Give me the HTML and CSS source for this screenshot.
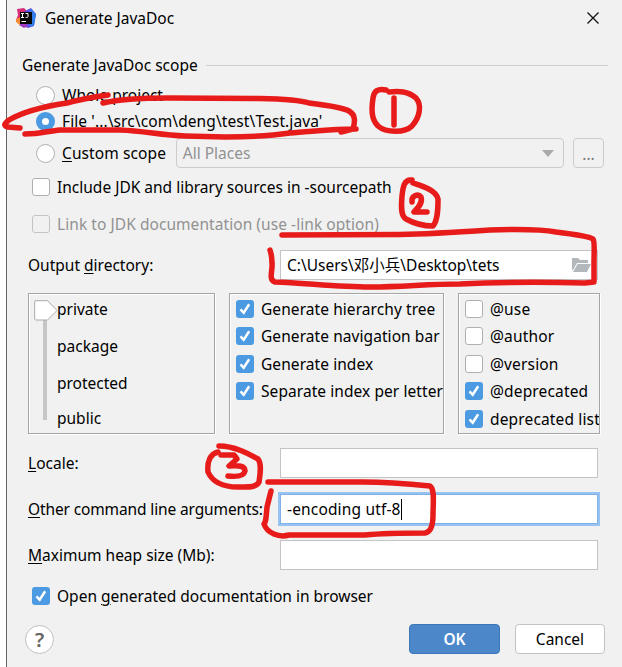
FILE: index.html
```html
<!DOCTYPE html>
<html lang="en">
<head>
<meta charset="utf-8">
<title>Generate JavaDoc</title>
<link rel="stylesheet" href="styles.css">
</head>
<body>
<svg class="defs" width="0" height="0"><symbol id="tick" viewBox="0 0 18 18"><path d="M4.500 9.300l3.200 3.500 5.500-8.500" fill="none" stroke="#fff" stroke-width="2.500"/></symbol></svg>
<main class="dialog">
  <header class="titlebar">
    <svg class="logo" viewBox="0 0 20 20">
      <path d="M1 1l7-1 4 4-4 9-8-1 2-5z" fill="#d72d79"/>
      <path d="M0 11l5-2 4 8-4 1-5-4z" fill="#f58b35"/>
      <path d="M9 3l6-3 5 6-2 12-6 2-8-3z" fill="#5450e8"/>
      <path d="M14 1l6 5-2 11-4 2z" fill="#317fe8"/>
      <path d="M3 17l5 3 4-2-3-3z" fill="#a438bd"/>
      <path d="M4 4h12v12H4z" fill="#080808"/>
      <path d="M5 5.500h3M6.500 5.500v4M5 9.500h3M9.500 5.500H12v3q0 1-1.500 1h-1M5.500 13.500H10" fill="none" stroke="#fff" stroke-width="1"/>
    </svg>
    <h1 class="title">Generate JavaDoc</h1>
    <svg class="close" viewBox="0 0 12 12"><path d="M.5.5l11 11M11.500.5l-11 11" stroke="#111" stroke-width="1.300"/></svg>
  </header>

  <div class="scope-head"><span>Generate JavaDoc scope</span><i class="rule"></i></div>
  <div class="radio-row"><i class="radio"></i><span>Whole project</span></div>
  <div class="radio-row"><i class="radio on"></i><span class="file">File '...\src\com\deng\test\Test.java'</span></div>
  <div class="custom-row">
    <i class="radio"></i><span class="custom"><u>C</u>ustom scope</span>
    <div class="combo"><span>All Places</span><svg class="arrow" viewBox="0 0 12 7"><path d="M0 0h12L6 7z" fill="#aaa"/></svg></div>
    <div class="more">...</div>
  </div>

  <div class="check-row include"><i class="box"></i><span>Include JDK and library sources in -sourcepath</span></div>
  <div class="check-row link"><i class="box"></i><span>Link to JDK documentation (use -link option)</span></div>

  <div class="field output"><label>Output <u>d</u>irectory:</label>
    <div class="input"><span class="path">C:\Users\邓小兵\Desktop\tets</span>
      <svg class="folder" viewBox="0 0 19 14"><path d="M0 0h6l2 2h8v3H5L1 12H0z" fill="#b3b8bc"/><path d="M5.500 6H19l-4 8H1z" fill="#b3b8bc"/></svg>
    </div>
  </div>

  <section class="panels">
    <div class="panel access">
      <svg class="slider" viewBox="0 0 24 126"><path d="M9 15h4v105H9z" fill="#c6c6c6"/><path d="M1 .7h12.500L23 10.500l-9.500 9.500H1.500l-.8-.8V1.500z" fill="#fff" stroke="#aaa"/></svg>
      <ul class="levels"><li>private</li><li>package</li><li>protected</li><li>public</li></ul>
    </div>
    <div class="panel options">
      <div class="opt"><svg class="box on"><use href="#tick"/></svg><span>Generate hierarchy tree</span></div>
      <div class="opt"><svg class="box on"><use href="#tick"/></svg><span>Generate navigation bar</span></div>
      <div class="opt"><svg class="box on"><use href="#tick"/></svg><span>Generate index</span></div>
      <div class="opt"><svg class="box on"><use href="#tick"/></svg><span>Separate index per letter</span></div>
    </div>
    <div class="panel tags">
      <div class="opt"><i class="box"></i><span>@use</span></div>
      <div class="opt"><i class="box"></i><span>@author</span></div>
      <div class="opt"><i class="box"></i><span>@version</span></div>
      <div class="opt"><svg class="box on"><use href="#tick"/></svg><span>@deprecated</span></div>
      <div class="opt"><svg class="box on"><use href="#tick"/></svg><span>deprecated list</span></div>
    </div>
  </section>

  <div class="field"><label><u>L</u>ocale:</label><div class="input"></div></div>
  <div class="field"><label class="arguments"><u>O</u>ther command line arguments:</label><div class="input focus"><span class="args">-encoding utf-8</span><i class="caret"></i></div></div>
  <div class="field"><label><u>M</u>aximum heap size (Mb):</label><div class="input"></div></div>
  <div class="check-row open"><svg class="box on"><use href="#tick"/></svg><span>Open <u>g</u>enerated documentation in browser</span></div>

  <footer class="footer"><div class="help">?</div><div class="btn ok">OK</div><div class="btn cancel">Cancel</div></footer>
</main>

<svg class="ink" viewBox="0 0 622 667">
  <path d="M108 95C94 97 78 100 67 103C47 106 26 110 9 120C4 124 3 126 8 127L20 128"/>
  <path d="M103 103C120 99 145 98 168 98L260 98.500C285 99 300 100 309 103C325 105 342 107 349 111C356 115 355 122 353 129L341 132M356 129C330 129 310 132 290 133C270 136 250 137 225 137L185 136C160 135 145 131 120 130L60 130C48 131 40 134 25 134"/>
  <path d="M386 90C378 88 374 91 373 98C371 112 372 120 378 126C386 133 405 133 412 126C420 117 422 105 416 98C408 91 399 91 389 92M394 98V125" />
  <path d="M412 180C404 179 403 187 402 196C401 208 401 216 406 219C415 224 425 226 433 226C438 220 438 208 438 199C436 190 422 186 413 183"/>
  <path d="M412 202C411 196 418 193 421 197C423 203 418 208 414 212H427" />
  <path d="M282 235L400 234.500C430 234 460 232 490 230C520 229 540 229 556 232C573 234 588 236 593 239C595 242 594 252 594 261V282L585 283C550 282 500 282 460 284C425 284 405 287 370 287C338 287 305 283 275 282C268 280 273 270 272 263C272 257 271 253 270 250"/>
  <path d="M219 446C235 446 249 454 258 459C262 464 260 475 259 482C256 488 248 487 238 487C220 487 212 481 208 472C207 462 210 454 218 452"/>
  <path d="M221 455H234L237 459L229 466C239 465 245 466 245 471C244 476 237 477 228 476"/>
  <path d="M268 482L363 482C390 482 410 484 430 486C435 489 433 503 433 515C433 524 431 532 425 533C407 533 386 533 365 535L289 535C279 538 267 533 264 524C266 522 266 518 267 507L271 491"/>
</svg>
</body>
</html>
```

FILE: styles.css
```css
* { box-sizing: border-box; }
body { margin: 0; width: 622px; height: 667px; overflow: hidden; background: #fff; color: #000; font: 15.500px/20px "Noto Sans", "Noto Sans CJK SC", sans-serif; white-space: nowrap; position: relative; }
.defs { position: absolute; }
u { text-decoration-thickness: 1px; text-underline-offset: 2px; }
label { padding-bottom: 1px; }
.dialog { margin-left: 6px; height: 667px; border-left: 1px solid #666; background: #f1f1f1; display: flex; flex-direction: column; }
.titlebar { height: 36px; padding: 0 23px 0 9px; display: flex; align-items: center; flex: none; }
.logo { width: 20px; height: 20px; }
.title { margin: 0 auto 0 9px; font-size: 15.500px; font-weight: 400; }
.close { width: 12px; height: 12px; }
.scope-head { margin-top: 19px; height: 20px; padding: 0 14px 0 15px; display: flex; align-items: center; gap: 8px; }
.rule { flex: 1; height: 1px; background: #cecece; }
.radio-row { height: 26px; padding-left: 29px; display: flex; align-items: center; gap: 6px; }
.scope-head + .radio-row { margin-top: 7px; }
.file { letter-spacing: .1px; }
.radio { width: 19px; height: 19px; border: 1px solid #b0b0b0; border-radius: 50%; background: #fff; flex: none; }
.radio + span { margin-left: 1px; }
.radio.on { border: 6px solid #4c9ae2; }
.custom-row { margin-top: 4px; height: 30px; padding: 0 18px 0 29px; display: flex; align-items: center; }
.custom-row .custom { width: 114px; margin-left: 7px; padding-bottom: 1px; letter-spacing: .1px; }
.combo { width: 389px; height: 30px; margin-right: 9px; padding: 0 9px 0 6px; border: 1px solid #ccc; border-radius: 4px; display: flex; align-items: center; justify-content: space-between; color: #929292; }
.arrow { width: 12px; height: 7px; }
.more { width: 31px; height: 30px; border: 1px solid #ccc; border-radius: 4px; text-align: center; line-height: 30px; color: #777; }
.check-row { height: 20px; padding-left: 25px; display: flex; align-items: center; gap: 7px; }
.include { margin-top: 9px; }
.link { margin-top: 17px; color: #929292; letter-spacing: .06px; }
.box { width: 18px; height: 18px; flex: none; border: 1px solid #b0b0b0; border-radius: 3px; background: #fff; }
.link .box { background: none; border-color: #c4c4c4; }
.box.on { border: 0; background: #4c9ae2; }
.field { height: 30px; padding: 0 24px 0 21px; display: flex; align-items: center; margin-bottom: 16px; }
.field label { width: 252px; flex: none; }
.arguments { letter-spacing: -.13px; }
.input { flex: 1; height: 30px; border: 1px solid #c4c4c4; background: #fff; display: flex; align-items: center; padding: 0 6px; }
.output { margin: 16px 0 13px; }
.folder { width: 19px; height: 14px; margin-left: auto; }
.focus { border-color: #7fb0e6; box-shadow: 0 0 0 2px #97c3f3; }
.args { letter-spacing: .16px; }
.caret { width: 1px; height: 21px; background: #000; }
.panels { padding-left: 21px; display: flex; gap: 14px; height: 141px; margin-bottom: 14px; flex: none; }
.panel { border: 1px solid #a5a5a5; box-shadow: 1px 1px 0 #fff, inset 1px 1px 0 #fff; overflow: hidden; }
.access { width: 187px; display: flex; padding: 6px 0 0 5px; }
.slider { width: 24px; height: 126px; flex: none; }
.levels { margin: -1px 0 0 -1px; padding: 0; list-style: none; }
.levels li { height: 37px; }
.levels li:nth-child(3) { height: 35px; }
.options { width: 215px; padding: 1px 0 0 6px; }
.options span { letter-spacing: .07px; }
.tags { width: 142px; padding: 1px 0 0 6px; }
.tags span { letter-spacing: .15px; }
.opt { height: 27.500px; display: flex; align-items: center; gap: 7px; }
.open { margin-top: 0; }
.footer { margin-top: 18px; height: 30px; padding: 0 17px 0 18px; display: flex; align-items: center; }
.help { width: 29px; height: 29px; border: 1px solid #c0c0c0; border-radius: 50%; background: #fff; color: #666; font-size: 20px; font-weight: 600; line-height: 27px; text-align: center; margin-right: auto; }
.btn { height: 30px; border-radius: 4px; text-align: center; line-height: 28px; }
.ok { width: 91px; border: 1px solid #3c77b8; background: #4c88c9; color: #fff; font-weight: 600; margin-right: 15px; }
.cancel { width: 90px; border: 1px solid #c4c4c4; background: #fff; }
.ink { position: absolute; left: 0; top: 0; width: 622px; height: 667px; fill: none; stroke: #e81b1b; stroke-width: 5.500; stroke-linecap: round; stroke-linejoin: round; }
```
